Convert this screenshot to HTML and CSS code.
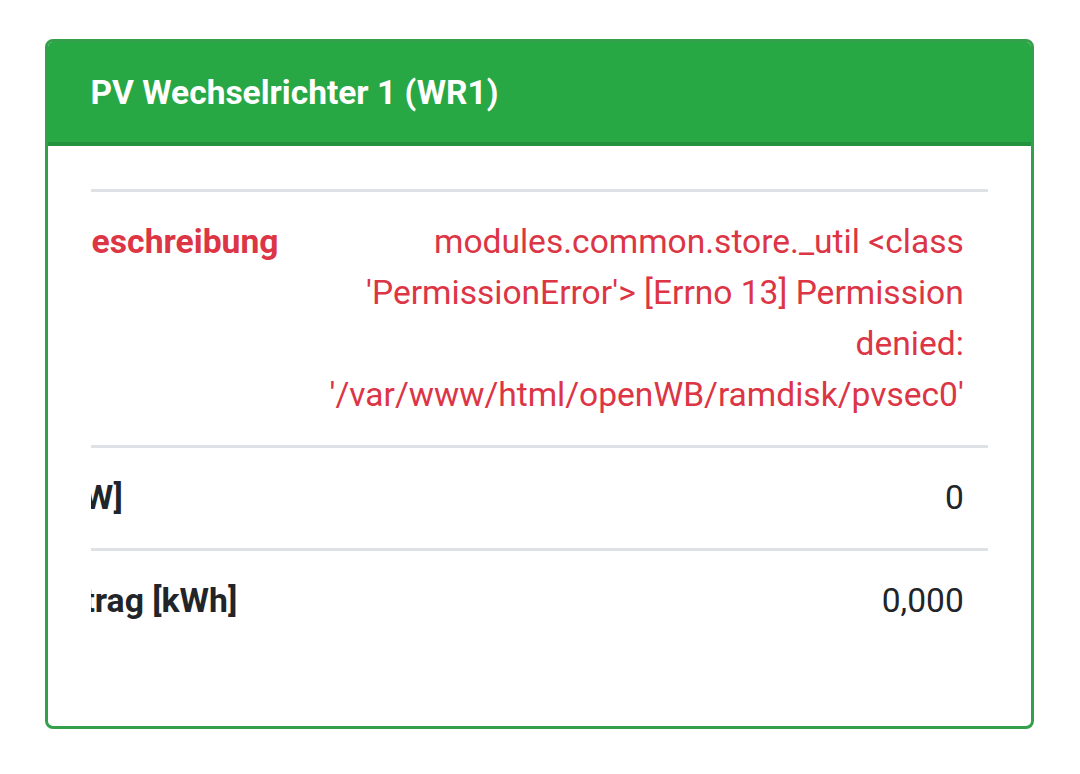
FILE: index.html
```html
<!DOCTYPE html>
<html lang="de">
<head>
  <meta charset="UTF-8">
  <title>Status - PV</title>
  <link rel="stylesheet" href="styles.css">
</head>
<body>
  <div class="card">
    <div class="card-header">PV Wechselrichter 1 (WR1)</div>
    <div class="card-body">
      <div class="table-responsive" id="pvTable">
        <table>
          <tbody>
            <tr class="text-danger">
              <th><svg class="icon" viewBox="0 0 24 24" aria-hidden="true"><path d="M12 2 1 21h22L12 2zm-1 7h2v6h-2V9zm0 8h2v2h-2v-2z" fill="currentColor"/></svg>Fehlerbeschreibung</th>
              <td>modules.common.store._util &lt;class 'PermissionError'&gt; [Errno 13] Permission denied: '/var/www/html/openWB/ramdisk/pvsec0'</td>
            </tr>
            <tr>
              <th>Leistung [W]</th>
              <td>0</td>
            </tr>
            <tr>
              <th>Gesamtertrag [kWh]</th>
              <td>0,000</td>
            </tr>
          </tbody>
        </table>
      </div>
    </div>
  </div>

  <script>
    // table is wider than the card, show the values side
    const wrap = document.getElementById("pvTable");
    wrap.scrollLeft = wrap.scrollWidth;
  </script>
</body>
</html>
```

FILE: styles.css
```css
body {
  margin: 0;
  font-family: Roboto, "Liberation Sans", sans-serif;
  font-size: 33.7px;
  line-height: 51px;
  color: #212529;
  background: #fff;
}
.card {
  margin: 39px 46px 0 45px;
  border: 3px solid #34a04c;
  border-radius: 8px;
  overflow: hidden;
}
.card-header {
  background-color: #28a745;
  color: #fff;
  font-weight: 700;
  font-size: 33.5px;
  line-height: 49px;
  padding: 25.5px 42.5px;
  border-bottom: 4px solid #23923d;
}
.card-body {
  padding: 42.5px;
}
.table-responsive {
  overflow-x: auto;
  scrollbar-width: none;
}
table {
  width: 100%;
  border-collapse: collapse;
  margin-bottom: 33px;
}
th, td {
  border-top: 3px solid #dee2e6;
  padding: 24.5px 25.5px;
  vertical-align: top;
}
th {
  text-align: left;
  font-weight: 700;
  white-space: nowrap;
}
td {
  text-align: right;
  font-size: 33.55px;
  padding-right: 24.5px;
}
.icon {
  width: 34px;
  height: 28px;
  margin-right: 9px;
  vertical-align: -3px;
}
.text-danger {
  color: #dc3545;
}
```
